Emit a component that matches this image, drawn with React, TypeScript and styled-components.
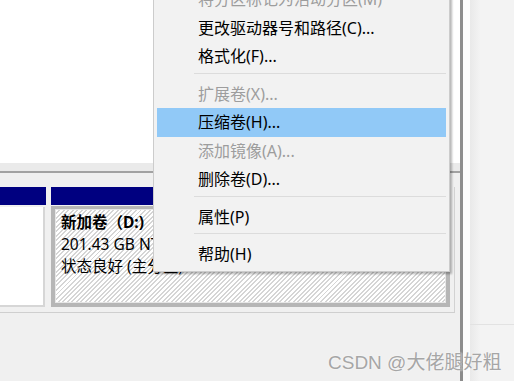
import React from "react";
import styled, { createGlobalStyle } from "styled-components";

const GlobalStyle = createGlobalStyle`
  html, body {
    margin: 0;
    padding: 0;
    background: #f0f0f0;
  }
`;

type MenuEntry =
  | { kind: "item"; label: string; disabled?: boolean; active?: boolean }
  | { kind: "sep" };

const menu: MenuEntry[] = [
  { kind: "item", label: "将分区标记为活动分区(M)", disabled: true },
  { kind: "item", label: "更改驱动器号和路径(C)..." },
  { kind: "item", label: "格式化(F)..." },
  { kind: "sep" },
  { kind: "item", label: "扩展卷(X)...", disabled: true },
  { kind: "item", label: "压缩卷(H)...", active: true },
  { kind: "item", label: "添加镜像(A)...", disabled: true },
  { kind: "item", label: "删除卷(D)..." },
  { kind: "sep" },
  { kind: "item", label: "属性(P)" },
  { kind: "sep" },
  { kind: "item", label: "帮助(H)" },
];

const App = () => {
  return (
    <>
      <GlobalStyle />
      <Window>
        <Main>
          <VolumeList />
          <Splitter />
          <DiskRow>
            <Column>
              <DiskHeader />
              <FreeCell>
                <FreeInner />
              </FreeCell>
            </Column>
            <Column>
              <DiskHeader />
              <PartitionCell>
                <Hatch>
                  <PartName>新加卷（D:)</PartName>
                  <PartLine>201.43 GB NTFS</PartLine>
                  <PartLine>状态良好 (主分区)</PartLine>
                </Hatch>
              </PartitionCell>
            </Column>
          </DiskRow>
        </Main>
        <PaneDivider />
        <Actions>
          <ActionsTop />
        </Actions>

        <ContextMenu>
          {menu.map((entry, i) =>
            entry.kind === "sep" ? (
              <Separator key={i} />
            ) : (
              <MenuItem key={i} $disabled={entry.disabled} $active={entry.active}>
                {entry.label}
              </MenuItem>
            )
          )}
        </ContextMenu>

        <Watermark>CSDN @大佬腿好粗</Watermark>
      </Window>
    </>
  );
};

const Window = styled.div`
  position: relative;
  width: 514px;
  height: 381px;
  overflow: hidden;
  display: flex;
  background: #f0f0f0;
  font-family: "Noto Sans", "Noto Sans CJK SC", sans-serif;
`;

const Main = styled.div`
  width: 460px;
  display: flex;
  flex-direction: column;
`;

const VolumeList = styled.div`
  height: 163px;
  background: #ffffff;
`;

const Splitter = styled.div`
  height: 24px;
  background: linear-gradient(
    to bottom,
    #eaeaea 0 8px,
    #a2a2a2 8px 10px,
    #f0f0f0 10px
  );
`;

const DiskRow = styled.div`
  box-sizing: border-box;
  width: 455px;
  height: 126px;
  display: grid;
  grid-template-columns: 46px 399px;
  column-gap: 5px;
  padding: 0 4px 5px 0;
  border-right: 1px solid #d2d2d2;
  border-bottom: 1px solid #cfcfcf;
  background: #f0f0f0;
`;

const Column = styled.div`
  display: flex;
  flex-direction: column;
  gap: 1px;
`;

const DiskHeader = styled.div`
  height: 18px;
  background: #000080;
`;

const FreeCell = styled.div`
  flex: 1;
  display: flex;
  padding: 1px 1px 0 0;
`;

const FreeInner = styled.div`
  flex: 1;
  background: #ffffff;
  border-right: 2px solid #d6d6d6;
  border-bottom: 2px solid #d6d6d6;
`;

const PartitionCell = styled.div`
  flex: 1;
  display: flex;
  border: 4px solid #b6b6b6;
  border-top-width: 3px;
  padding: 1px;
  background: #e6e6e6;
`;

const Hatch = styled.div`
  flex: 1;
  padding: 1px 5px;
  background: repeating-linear-gradient(
    135deg,
    #ffffff 0 1.8px,
    #d5d5d5 1.8px 3.2px
  );
`;

const PartName = styled.div`
  font-size: 15.5px;
  line-height: 22px;
  font-weight: 700;
  color: #000000;
  white-space: nowrap;
`;

const PartLine = styled.div`
  font-size: 15.5px;
  line-height: 22px;
  color: #000000;
  white-space: nowrap;
`;

const PaneDivider = styled.div`
  box-sizing: border-box;
  width: 10px;
  border-left: 3px solid #8c8c8c;
  background: #fbfbfb;
`;

const Actions = styled.div`
  flex: 1;
  background: linear-gradient(to right, #e9e9e9, #f3f3f3 10px);
`;

const ActionsTop = styled.div`
  height: 324px;
  border-bottom: 1px solid #e2e2e2;
`;

const ContextMenu = styled.div`
  position: absolute;
  left: 153px;
  top: -18px;
  width: 297px;
  box-sizing: border-box;
  padding: 2px 3px 2px;
  background: #f2f2f2;
  border: 1px solid #cccccc;
  box-shadow: 2px 2px 2px rgba(0, 0, 0, 0.28);
`;

const MenuItem = styled.div<{ $disabled?: boolean; $active?: boolean }>`
  height: 28.5px;
  line-height: 28.5px;
  padding-left: 41px;
  font-size: 16px;
  white-space: nowrap;
  color: ${(p) => (p.$disabled ? "#9d9d9d" : "#000000")};
  background: ${(p) => (p.$active ? "#91c9f7" : "transparent")};
`;

const Separator = styled.div`
  height: 9px;
  margin-left: 37px;
  background: linear-gradient(
    to bottom,
    transparent 0 2px,
    #dcdcdc 2px 3px,
    transparent 3px
  );
`;

const Watermark = styled.div`
  position: absolute;
  left: 328px;
  top: 350px;
  font-family: "Liberation Sans", "Noto Sans CJK SC", sans-serif;
  font-size: 19px;
  line-height: 26px;
  color: #a6a6a6;
  text-shadow: 0 0 2px #ffffff;
  white-space: nowrap;
`;

export default App;
